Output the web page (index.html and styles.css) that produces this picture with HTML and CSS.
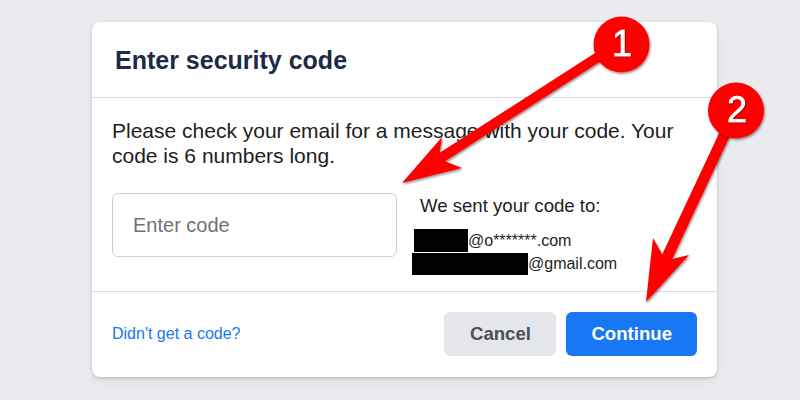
FILE: index.html
```html
<!DOCTYPE html>
<html lang="en">
<head>
<meta charset="utf-8">
<title>Enter security code</title>
<link rel="stylesheet" href="styles.css">
</head>
<body>
<div class="page">
  <div class="card">
    <div class="card-header">
      <h2 class="title">Enter security code</h2>
    </div>
    <div class="card-body">
      <p class="message">Please check your email for a message with your code. Your code is 6 numbers long.</p>
      <div class="code-row">
        <input class="code-input" type="text" placeholder="Enter code">
        <div class="sent">
          <p class="sent-to">We sent your code to:</p>
          <div class="email-row"><span class="redact redact-1"></span><span>@o*******.com</span></div>
          <div class="email-row"><span class="redact redact-2"></span><span>@gmail.com</span></div>
        </div>
      </div>
    </div>
    <div class="card-footer">
      <a class="link" href="#">Didn't get a code?</a>
      <div class="actions">
        <button class="btn btn-cancel">Cancel</button>
        <button class="btn btn-continue">Continue</button>
      </div>
    </div>
  </div>
</div>
<svg class="annotations" width="800" height="400" viewBox="0 0 800 400" xmlns="http://www.w3.org/2000/svg">
  <defs>
    <filter id="sh" x="-20%" y="-20%" width="140%" height="140%">
      <feDropShadow dx="1" dy="1.5" stdDeviation="1" flood-color="#000" flood-opacity="0.45"/>
    </filter>
    <filter id="tsh" x="-30%" y="-30%" width="160%" height="160%">
      <feDropShadow dx="0.8" dy="0.8" stdDeviation="0.6" flood-color="#400000" flood-opacity="0.6"/>
    </filter>
  </defs>
  <polygon filter="url(#sh)" fill="#ff0000" points="402,183 462,168 445.1,161.2 623.7,46.5 618.3,38.1 439.7,152.8 442,137"/>
  <polygon filter="url(#sh)" fill="#ff0000" points="646,302 689,255 672.2,259 741,112.3 731,107.7 662.2,254.4 653,238"/>
  <g filter="url(#sh)">
    <circle cx="621.5" cy="44.5" r="28" fill="#ff0000"/>
    <circle cx="736" cy="110.5" r="28" fill="#ff0000"/>
  </g>
  <g filter="url(#tsh)">
    <text class="badge-num" x="622" y="56" text-anchor="middle">1</text>
    <text class="badge-num" x="737" y="122" text-anchor="middle">2</text>
  </g>
</svg>
</body>
</html>
```
FILE: styles.css
```css
html, body {
  margin: 0;
  padding: 0;
}
body {
  width: 800px;
  height: 400px;
  overflow: hidden;
  background: #e9ebee;
  font-family: "Liberation Sans", Arial, sans-serif;
  color: #1c1e21;
  position: relative;
}
.page {
  padding: 22px 0 0 92px;
}
.card {
  width: 625px;
  background: #ffffff;
  border-radius: 8px;
  box-shadow: 0 1px 3px rgba(0, 0, 0, 0.18), 0 4px 10px rgba(0, 0, 0, 0.06);
}
.card-header {
  height: 75px;
  display: flex;
  align-items: center;
  padding: 0 23px;
  border-bottom: 1px solid #dadde1;
}
.title {
  margin: 0;
  font-size: 25px;
  line-height: 30px;
  font-weight: 700;
  color: #1c2a48;
}
.card-body {
  padding: 19.5px 20px 16px 20px;
}
.message {
  margin: 0 0 25.5px 0;
  font-size: 21px;
  line-height: 25px;
}
.code-row {
  display: flex;
  align-items: flex-start;
}
.code-input {
  width: 285px;
  height: 64px;
  box-sizing: border-box;
  border: 1px solid #ccd0d5;
  border-radius: 6px;
  padding: 0 20px;
  font-family: "Liberation Sans", Arial, sans-serif;
  font-size: 20px;
  color: #1c1e21;
  background: #fff;
  outline: none;
  margin: 0;
}
.code-input::placeholder {
  color: #6f7378;
}
.sent {
  margin-left: 15px;
  padding-top: 2px;
}
.sent-to {
  margin: 0 0 12px 8px;
  font-size: 18.6px;
  line-height: 22px;
}
.email-row {
  display: flex;
  align-items: center;
  height: 23px;
  font-size: 16px;
  line-height: 23px;
}
.redact {
  display: block;
  background: #000;
}
.redact-1 {
  width: 54px;
  height: 23px;
  margin-left: 2px;
}
.redact-2 {
  width: 116px;
  height: 22px;
}
.card-footer {
  border-top: 1px solid #dadde1;
  padding: 20px 20px 21px 20px;
  display: flex;
  align-items: center;
  justify-content: space-between;
}
.link {
  font-size: 16px;
  color: #1877f2;
  text-decoration: none;
}
.actions {
  display: flex;
  gap: 10px;
}
.btn {
  height: 44px;
  padding: 0 25.5px;
  border: none;
  border-radius: 6px;
  font-family: "Liberation Sans", Arial, sans-serif;
  font-size: 18.6px;
  font-weight: 700;
  cursor: pointer;
}
.btn-cancel {
  background: #e4e6eb;
  color: #4b4f56;
}
.btn-continue {
  background: #1877f2;
  color: #ffffff;
  padding: 0 25px;
}
.annotations {
  position: absolute;
  top: 0;
  left: 0;
  pointer-events: none;
}
.badge-num {
  font-family: "Liberation Sans", Arial, sans-serif;
  font-size: 36px;
  fill: #ffffff;
  stroke: #ffffff;
  stroke-width: 0.5px;
}
```
